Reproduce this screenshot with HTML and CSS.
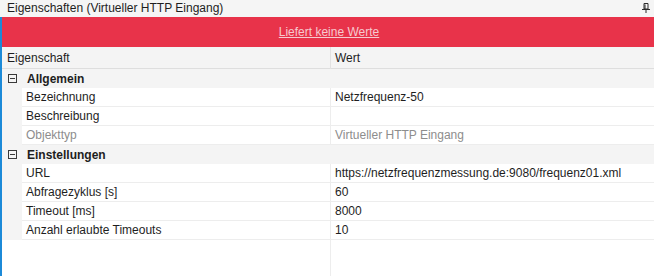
FILE: index.html
```html
<!DOCTYPE html>
<html lang="de">
<head>
<meta charset="utf-8">
<title>Eigenschaften</title>
<link rel="stylesheet" href="styles.css">
</head>
<body>
<div class="window">
  <div class="titlebar">
    <span class="title">Eigenschaften (Virtueller HTTP Eingang)</span>
    <svg class="pin" width="8" height="10" viewBox="0 0 8 10" aria-hidden="true">
      <path d="M2 0.5H6V6H2Z M3 1.5V6" fill="none" stroke="#2b2b2b" stroke-width="1"/>
      <path d="M0 6.5H8" stroke="#2b2b2b" stroke-width="1"/>
      <path d="M4 7V10" stroke="#2b2b2b" stroke-width="1"/>
    </svg>
  </div>
  <div class="main">
    <div class="banner"><a class="banner-link" href="#">Liefert keine Werte</a></div>
    <div class="grid-head">
      <div class="head-name">Eigenschaft</div>
      <div class="head-value">Wert</div>
    </div>
    <div class="category">
      <span class="toggle"></span>
      <span class="cat-label">Allgemein</span>
    </div>
    <div class="row"><div class="gutter"></div><div class="name">Bezeichnung</div><div class="value">Netzfrequenz-50</div></div>
    <div class="row"><div class="gutter"></div><div class="name">Beschreibung</div><div class="value"></div></div>
    <div class="row readonly"><div class="gutter"></div><div class="name">Objekttyp</div><div class="value">Virtueller HTTP Eingang</div></div>
    <div class="category">
      <span class="toggle"></span>
      <span class="cat-label">Einstellungen</span>
    </div>
    <div class="row"><div class="gutter"></div><div class="name">URL</div><div class="value">https://netzfrequenzmessung.de:9080/frequenz01.xml</div></div>
    <div class="row"><div class="gutter"></div><div class="name">Abfragezyklus [s]</div><div class="value">60</div></div>
    <div class="row"><div class="gutter"></div><div class="name">Timeout [ms]</div><div class="value">8000</div></div>
    <div class="row"><div class="gutter"></div><div class="name">Anzahl erlaubte Timeouts</div><div class="value">10</div></div>
    <div class="filler"><div class="fill-name"></div><div class="fill-value"></div></div>
  </div>
</div>
</body>
</html>
```
FILE: styles.css
```css
html, body {
  margin: 0;
  padding: 0;
  height: 100%;
  background: #f5f5f5;
}
body {
  font-family: "Liberation Sans", Arial, sans-serif;
  font-size: 12px;
  color: #1e1e1e;
  overflow: hidden;
}
.window {
  height: 276px;
  display: flex;
  flex-direction: column;
}
.titlebar {
  height: 17px;
  display: flex;
  align-items: center;
  justify-content: space-between;
  padding: 0 4px 0 7px;
  background: #f5f5f5;
  color: #1e1e1e;
}
.title {
  line-height: 17px;
}
.pin {
  display: block;
  margin-top: -1px;
}
.main {
  flex: 1;
  display: flex;
  flex-direction: column;
  border-left: 2px solid #1c8ad8;
  min-height: 0;
}
.banner {
  height: 30px;
  background: #e8334a;
  display: flex;
  align-items: center;
  justify-content: center;
}
.banner-link {
  color: #f6c9cf;
  text-decoration: underline;
  padding-left: 2px;
}
.grid-head {
  height: 22px;
  display: grid;
  grid-template-columns: 328px 1fr;
  background: #f4f4f4;
  border-bottom: 1px solid #dedede;
  box-sizing: border-box;
}
.head-name {
  padding-left: 5px;
  line-height: 22px;
}
.head-value {
  padding-left: 4px;
  line-height: 22px;
  border-left: 1px solid #e2e2e2;
}
.category {
  height: 19px;
  display: flex;
  align-items: center;
  background: #f4f4f4;
  box-sizing: border-box;
}
.toggle {
  width: 9px;
  height: 9px;
  box-sizing: border-box;
  border: 1px solid #3a3a3a;
  margin-left: 6px;
  margin-right: 9px;
  position: relative;
}
.toggle::after {
  content: "";
  position: absolute;
  left: 1px;
  right: 1px;
  top: 3px;
  height: 1px;
  background: #3a3a3a;
}
.cat-label {
  font-weight: bold;
  padding-left: 1px;
}
.row {
  height: 19px;
  display: grid;
  grid-template-columns: 20px 308px 1fr;
  background: #ffffff;
}
.gutter {
  background: #f4f4f4;
}
.name, .value {
  border-bottom: 1px solid #ededed;
  line-height: 18px;
  white-space: nowrap;
  overflow: hidden;
}
.name {
  padding-left: 4px;
}
.value {
  padding-left: 4px;
  border-left: 1px solid #ededed;
}
.readonly .name, .readonly .value {
  color: #8d8d8d;
}
.filler {
  flex: 1;
  display: grid;
  grid-template-columns: 328px 1fr;
  background: #ffffff;
}
.fill-value {
  border-left: 1px solid #ededed;
}
```
